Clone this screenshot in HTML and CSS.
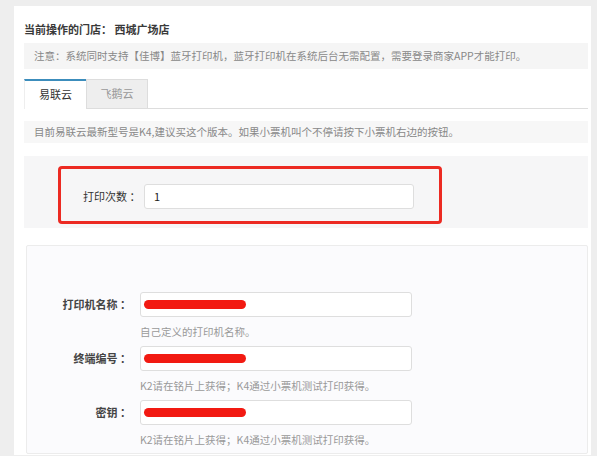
FILE: index.html
```html
<!DOCTYPE html>
<html lang="zh">
<head>
<meta charset="utf-8">
<title>打印机设置</title>
<link rel="stylesheet" href="styles.css">
</head>
<body>
<div class="card">
  <div class="title">当前操作的门店： 西城广场店</div>
  <div class="notice">注意：系统同时支持【佳博】蓝牙打印机，蓝牙打印机在系统后台无需配置，需要登录商家APP才能打印。</div>
  <div class="tabs">
    <div class="tab active">易联云</div>
    <div class="tab">飞鹅云</div>
  </div>
  <div class="info">目前易联云最新型号是K4,建议买这个版本。如果小票机叫个不停请按下小票机右边的按钮。</div>
  <div class="count-section">
    <div class="highlight">
      <label class="count-label">打印次数 ：</label>
      <div class="input count-input">1</div>
    </div>
  </div>
  <div class="form-section">
    <div class="row">
      <label class="label">打印机名称 ：</label>
      <div class="field">
        <div class="input"><span class="redact"></span></div>
        <div class="help">自己定义的打印机名称。</div>
      </div>
    </div>
    <div class="row">
      <label class="label">终端编号 ：</label>
      <div class="field">
        <div class="input"><span class="redact"></span></div>
        <div class="help">K2请在铭片上获得；K4通过小票机测试打印获得。</div>
      </div>
    </div>
    <div class="row">
      <label class="label">密钥 ：</label>
      <div class="field">
        <div class="input"><span class="redact"></span></div>
        <div class="help">K2请在铭片上获得；K4通过小票机测试打印获得。</div>
      </div>
    </div>
  </div>
</div>
</body>
</html>
```
FILE: styles.css
```css
html, body {
  margin: 0;
  padding: 0;
  height: 100%;
  overflow: hidden;
}
body {
  background: #eeeeee;
  font-family: "Noto Sans CJK SC", "Noto Sans", sans-serif;
  font-size: 11px;
  color: #333;
}
.card {
  background: #ffffff;
  margin: 6px 6px 0 14px;
  padding: 16px 3px 0 10px;
  height: 449px;
  box-sizing: border-box;
}
.title {
  font-size: 11px;
  font-weight: bold;
  color: #3a3a3a;
  line-height: 14px;
  height: 14px;
}
.notice {
  margin-top: 7px;
  height: 26px;
  line-height: 26px;
  background: #f5f5f5;
  color: #888;
  padding-left: 10px;
  font-size: 10.5px;
  white-space: nowrap;
  overflow: hidden;
}
.tabs {
  margin-top: 10px;
  display: flex;
  height: 29px;
  border-bottom: 1px solid #dddddd;
}
.tab {
  width: 62px;
  box-sizing: border-box;
  text-align: center;
  line-height: 27px;
  font-size: 11px;
  color: #999;
  background: #eeeeee;
  border: 1px solid #dddddd;
  border-bottom: none;
}
.tab.active {
  background: #ffffff;
  color: #333;
  border: none;
  border-top: 2px solid #3c8dbc;
  border-left: 1px solid #eeeeee;
  margin-bottom: -1px;
  height: 30px;
}
.info {
  margin-top: 12px;
  height: 22px;
  line-height: 22px;
  background: #f7f7f7;
  color: #888;
  padding-left: 10px;
  font-size: 10.5px;
  white-space: nowrap;
}
.count-section {
  margin-top: 13px;
  background: #f6f6f7;
  height: 72px;
  padding-top: 10px;
  padding-left: 34px;
  box-sizing: border-box;
}
.highlight {
  width: 384px;
  height: 58px;
  box-sizing: border-box;
  border: 3px solid #ec2a22;
  border-radius: 4px;
  display: flex;
  align-items: center;
  padding-left: 22px;
  padding-top: 2px;
}
.count-label {
  width: 61px;
  font-size: 11px;
  color: #333;
}
.input {
  box-sizing: border-box;
  height: 25px;
  background: #ffffff;
  border: 1px solid #dedede;
  border-radius: 3px;
  display: flex;
  align-items: center;
  padding-left: 3px;
}
.count-input {
  width: 270px;
  padding-left: 9px;
  font-size: 11px;
  color: #222;
}
.form-section {
  margin-top: 17px;
  margin-left: 2px;
  background: #fbfbfd;
  border: 1px solid #ececec;
  border-radius: 2px;
  padding-top: 46px;
  height: 209px;
  box-sizing: border-box;
}
.row {
  display: flex;
  align-items: flex-start;
  height: 54px;
}
.label {
  width: 113px;
  text-align: right;
  padding-right: 9px;
  box-sizing: border-box;
  line-height: 25px;
  font-size: 11px;
  font-weight: bold;
  color: #444;
}
.field {
  display: flex;
  flex-direction: column;
}
.field .input {
  width: 272px;
}
.redact {
  display: block;
  width: 102px;
  height: 9px;
  border-radius: 5px;
  background: #f21a12;
}
.help {
  margin-top: 8px;
  font-size: 10.5px;
  line-height: 14px;
  color: #999;
}
```
